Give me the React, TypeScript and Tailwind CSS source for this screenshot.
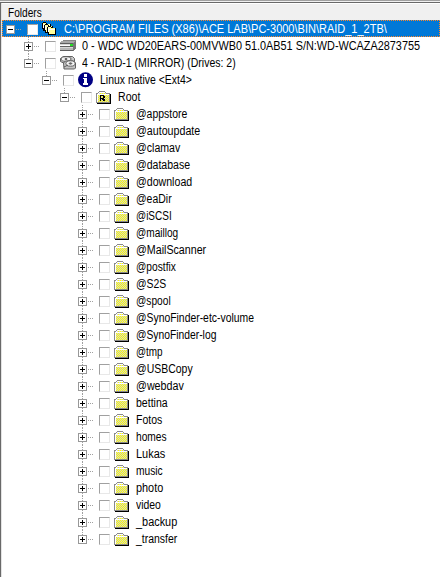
import { useLayoutEffect, useRef, useState } from "react";

type IconKind = "stack" | "drive" | "raid" | "info" | "root" | "folder";

interface Node {
  label: string;
  level: number;
  width: number;
  icon: IconKind;
  open?: boolean;
  last?: boolean;
}

const folders: [string, number][] = [
  ["@appstore", 51], ["@autoupdate", 64], ["@clamav", 44], ["@database", 54],
  ["@download", 56], ["@eaDir", 36], ["@iSCSI", 36], ["@maillog", 42],
  ["@MailScanner", 70], ["@postfix", 40], ["@S2S", 30], ["@spool", 35],
  ["@SynoFinder-etc-volume", 118], ["@SynoFinder-log", 80], ["@tmp", 27],
  ["@USBCopy", 57], ["@webdav", 48], ["bettina", 32], ["Fotos", 26],
  ["homes", 31], ["Lukas", 29], ["music", 27], ["photo", 27], ["video", 25],
  ["_backup", 41], ["_transfer", 41],
];

const nodes: Node[] = [
  { label: "C:\\PROGRAM FILES (X86)\\ACE LAB\\PC-3000\\BIN\\RAID_1_2TB\\", level: 0, width: 323, icon: "stack", open: true, last: true },
  { label: "0 - WDC WD20EARS-00MVWB0 51.0AB51 S/N:WD-WCAZA2873755", level: 1, width: 338, icon: "drive" },
  { label: "4 - RAID-1 (MIRROR) (Drives: 2)", level: 1, width: 154, icon: "raid", open: true, last: true },
  { label: "Linux native <Ext4>", level: 2, width: 92, icon: "info", open: true, last: true },
  { label: "Root", level: 3, width: 22, icon: "root", open: true, last: true },
  ...folders.map(([label, width], i): Node => ({
    label, level: 4, width, icon: "folder", last: i === folders.length - 1,
  })),
];

function FolderShape() {
  return (
    <>
      <path d="M1 3h2V2h7v1h5v9H1z" fill="url(#dither)" />
      <path d="M0 2h2v1h-1v9h-1zM2 1h1v1h-1zM3 0h6v1h-6zM9 1h1v1h-1zM10 2h4v1h-4zM0 11h14v1h-14zM13 3h1v8h-1z" fill="#8a8a8a" />
      <path d="M3 1h6v1h-6zM2 2h1v1h-1zM1 3h12v1h-12zM1 3h1v8h-1z" fill="#fff" />
      <path d="M14 3h1v10h-14v-1h13z" fill="#000" />
    </>
  );
}

/** One folder of the cascaded stack, black outline with a pale yellow face. */
function StackedFolder({ x, y }: { x: number; y: number }) {
  return (
    <g transform={`translate(${x} ${y})`}>
      <path d="M0 1h1V0h3v1h1v1h4v7H1V7H0z" fill="#000" />
      <path d="M1 1h3v1h4v6H2V6H1z" fill="#ffff9c" />
      <path d="M1 2h1v4H1zM2 3h6v1H2z" fill="#fff" />
    </g>
  );
}

function Icon({ kind }: { kind: IconKind }) {
  return (
    <svg className="block h-[17px] w-[18px] shrink-0" viewBox="0 0 18 17" shapeRendering="crispEdges">
      {kind === "folder" && <g transform="translate(0 3)"><FolderShape /></g>}
      {kind === "root" && (
        <g transform="translate(0 3)">
          <FolderShape />
          <path d="M4 4h4v1h1v2h-1v1h1v2h-2v-1h-1v-1h-1v2h-1zM5 5v2h2v-2z" fill="#000" fillRule="evenodd" />
        </g>
      )}
      {kind === "stack" && (
        <g>
          <StackedFolder x={0} y={2} />
          <StackedFolder x={2} y={4} />
          <StackedFolder x={5} y={6} />
        </g>
      )}
      {kind === "drive" && (
        <g>
          <path d="M3 3h13v1h-1v1h-1v1H0V5h1V4h2z" fill="#a8a8a8" />
          <path d="M3 3h13v1H2z" fill="#858585" />
          <path d="M0 6h13v1H0zM0 7h13v1H0zM0 10h13v1H0z" fill="#d8d8d8" />
          <path d="M0 6h13v1H0zM0 9h13v1H0zM0 13h14v1H0z" fill="#606060" />
          <path d="M0 11h13v2H0z" fill="#b8b8b8" />
          <path d="M13 6h1V5h1V4h1v8h-1v1h-1v1h-1z" fill="#777" />
          <path d="M10 7h3v2h-3z" fill="#25dd25" />
        </g>
      )}
      {kind === "raid" && (
        <g shapeRendering="auto" stroke="#555" strokeWidth="0.9">
          <path d="M.5 4.5l3-2h9l2 2v3l-10 2-4-2z" fill="#c8c8c8" />
          <ellipse cx="6" cy="5" rx="5" ry="2.3" fill="#f4f4f4" />
          <ellipse cx="6" cy="5" rx="1.2" ry=".6" fill="#888" />
          <path d="M3.5 9l2-2h8l2 2v5l-1 1H4z" fill="#c4c4c4" />
          <ellipse cx="10.5" cy="9.5" rx="4.6" ry="2.7" fill="#f4f4f4" />
          <ellipse cx="10.5" cy="9.5" rx="1.3" ry=".7" fill="#777" />
          <path d="M4 13l4-2" fill="none" />
        </g>
      )}
      {kind === "info" && (
        <g shapeRendering="auto">
          <circle cx="7.5" cy="8.8" r="7.5" fill="#000084" />
          <path d="M6 3h3v3H6zM5 7h4v5h1v2H5v-2h1V8H5z" fill="#fff" />
        </g>
      )}
    </svg>
  );
}

const dots = "bg-[repeating-linear-gradient(to_bottom,#a0a0a0_0px,#a0a0a0_1px,transparent_1px,transparent_2px)]";

function Expander({ open, level, last }: { open?: boolean; level: number; last?: boolean }) {
  return (
    <div className="flex w-[9px] shrink-0 flex-col items-center">
      <div className={`h-[5px] w-px ${level > 0 ? dots : ""}`} />
      <div className="h-[9px] w-[9px] shrink-0">
        <svg className="block" width="9" height="9" shapeRendering="crispEdges">
          <rect x="0.5" y="0.5" width="8" height="8" fill="#fff" stroke="#989898" />
          <path d={open ? "M2 4h5v1H2z" : "M2 4h5v1H2zM4 2h1v5H4z"} fill="#000" />
        </svg>
      </div>
      <div className={`h-[3px] w-px ${last ? "" : dots}`} />
    </div>
  );
}

function Label({ text, width }: { text: string; width: number }) {
  const ref = useRef<HTMLSpanElement>(null);
  const [scale, setScale] = useState(1);
  useLayoutEffect(() => {
    if (ref.current) setScale(width / ref.current.offsetWidth);
  }, [width]);
  return (
    <span ref={ref} className="block w-fit origin-left whitespace-pre text-[12.5px] leading-[17px]" style={{ transform: `scaleX(${scale})` }}>
      {text}
    </span>
  );
}

const indent = ["pl-[4px]", "pl-[22px]", "pl-[40px]", "pl-[58px]", "pl-[76px]"];

function Row({ node }: { node: Node }) {
  const selected = node.level === 0;
  return (
    <div className={`flex h-[17px] ${indent[node.level]} ${selected ? "bg-[#0078d7] text-white outline-1 -outline-offset-1 outline-dotted outline-[#ff8728]" : "text-black"}`}>
      <Expander open={node.open} level={node.level} last={node.last} />
      <div className="mt-[9px] ml-px h-px w-[5px] shrink-0 bg-[repeating-linear-gradient(to_right,#a0a0a0_0px,#a0a0a0_1px,transparent_1px,transparent_2px)]" />
      <div className="mt-[4px] ml-[6px] h-[11px] w-[11px] shrink-0 border border-t-[#a0a0a0] border-r-[#e8e8e8] border-b-[#e8e8e8] border-l-[#a0a0a0] bg-white" />
      <div className="ml-[4px] w-[22px] shrink-0"><Icon kind={node.icon} /></div>
      <div className="h-[17px] pt-px"><Label text={node.label} width={node.width} /></div>
    </div>
  );
}

export default function App() {
  return (
    <div className="flex h-[577px] w-[440px] flex-col overflow-hidden bg-white font-['Liberation_Sans',Arial,sans-serif]">
      <svg width="0" height="0" className="block h-0 w-0 shrink-0">
        <defs>
          <pattern id="dither" width="2" height="2" patternUnits="userSpaceOnUse">
            <rect width="2" height="2" fill="#d0d0d0" />
            <path d="M0 0h1v1H0zM1 1h1v1H1z" fill="#ff0" />
          </pattern>
        </defs>
      </svg>
      <div className="h-px shrink-0 bg-[#a0a0a0]" />
      <div className="h-px shrink-0 bg-[#f0f0f0]" />
      <div className="h-px shrink-0 bg-[#696969]" />
      <div className="flex grow flex-col border-l border-[#696969]">
        <div className="flex grow flex-col border-l border-[#e3e3e3]">
          <div className="h-[17px] shrink-0 border-t border-white bg-[#f0f0f0] pt-px pl-[6px] text-black">
            <Label text="Folders" width={34} />
          </div>
          <div className="flex flex-col">
            {nodes.map((node) => <Row key={node.label} node={node} />)}
          </div>
        </div>
      </div>
    </div>
  );
}
